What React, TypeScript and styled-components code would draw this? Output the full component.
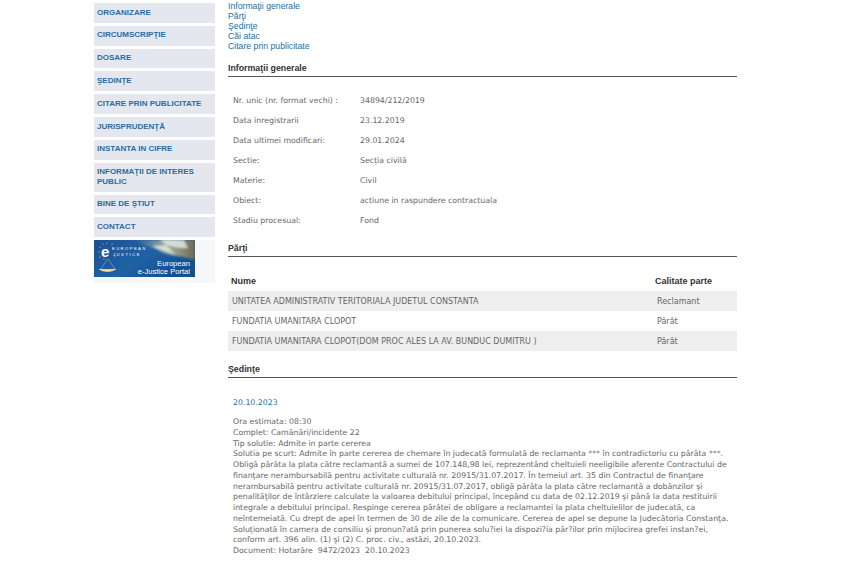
import React from 'react';
import styled, { createGlobalStyle } from 'styled-components';

const Global = createGlobalStyle`
  html, body { margin: 0; padding: 0; background: #fff; }
  body { font-family: "Liberation Sans", Arial, sans-serif; }
`;
const Page = styled.div`
  display: flex; align-items: flex-start; gap: 13px;
  width: 855px; height: 574px; overflow: hidden; padding: 3px 0 0 94px; box-sizing: border-box;
`;
const Sidebar = styled.nav`
  width: 121px; flex: none; display: flex; flex-direction: column; gap: 3px;
`;
const NavItem = styled.a`
  display: flex; align-items: center; box-sizing: border-box; min-height: 19.8px;
  padding: 4px 3px; background: #e4e8ee; color: #2a6ca6;
  font: bold 8px/10.5px "Liberation Sans", Arial, sans-serif;
`;
const BannerBox = styled.div`
  height: 43px; background: #f5f7fa;
  svg { display: block; }
`;
const BannerText = styled.text`
  font-family: "Liberation Sans", Arial, sans-serif; fill: #fff;
`;
const Main = styled.main`
  width: 509px; flex: none; margin-top: -3px;
`;
const Toc = styled.div`
  display: flex; flex-direction: column; padding-top: 1px;
`;
const TocLink = styled.a`
  font: 8.7px/10px "Liberation Sans", Arial, sans-serif; color: #1f6f9f;
`;
const Heading = styled.h2<{ $top: number }>`
  margin: ${p => p.$top}px 0 0; padding: 0 0 1px; height: 13px; border-bottom: 1px solid #555;
  font: bold 8.8px/13px "Liberation Sans", Arial, sans-serif; color: #333;
`;
const InfoList = styled.div`
  display: flex; flex-direction: column; padding: 14px 0 0 5px;
`;
const InfoRow = styled.div`
  display: grid; grid-template-columns: 127px 1fr; height: 20px; align-items: center;
  font: 7.8px/20px "DejaVu Sans", Verdana, sans-serif; color: #666;
`;
const PartyTable = styled.div`
  display: flex; flex-direction: column; padding-top: 14px;
`;
const PartyHead = styled.div`
  display: grid; grid-template-columns: 424px 1fr; height: 20px; padding-left: 3px;
  font: bold 9px/20px "Liberation Sans", Arial, sans-serif; color: #333;
`;
const PartyRow = styled.div<{ $shade?: boolean }>`
  display: grid; grid-template-columns: 425px 1fr; height: 20px; padding-left: 4px;
  background: ${p => (p.$shade ? '#eeeeee' : 'transparent')};
  font: 8px/21.5px "DejaVu Sans", Verdana, sans-serif; color: #666;
`;
const DateLink = styled.div`
  margin: 19px 0 0 5px;
  font: 7.8px/11px "DejaVu Sans", Verdana, sans-serif; color: #1f6f9f;
`;
const Details = styled.div`
  margin: 9px 0 0 5px; white-space: pre;
  font: 7.8px/10.75px "DejaVu Sans", Verdana, sans-serif; color: #666;
`;

const nav = ['ORGANIZARE', 'CIRCUMSCRIPŢIE', 'DOSARE', 'ŞEDINŢE', 'CITARE PRIN PUBLICITATE', 'JURISPRUDENŢĂ', 'INSTANTA IN CIFRE', 'INFORMAŢII DE INTERES PUBLIC', 'BINE DE ŞTIUT', 'CONTACT'];
const toc = ['Informaţii generale', 'Părţi', 'Şedinţe', 'Căi atac', 'Citare prin publicitate'];
const info = [
  ['Nr. unic (nr. format vechi) :', '34894/212/2019'],
  ['Data inregistrarii', '23.12.2019'],
  ['Data ultimei modificari:', '29.01.2024'],
  ['Sectie:', 'Secția civilă'],
  ['Materie:', 'Civil'],
  ['Obiect:', 'actiune in raspundere contractuala'],
  ['Stadiu procesual:', 'Fond'],
];
const parties = [
  ['UNITATEA ADMINISTRATIV TERITORIALA JUDETUL CONSTANTA', 'Reclamant'],
  ['FUNDATIA UMANITARA CLOPOT', 'Pârât'],
  ['FUNDATIA UMANITARA CLOPOT(DOM PROC ALES LA AV. BUNDUC DUMITRU )', 'Pârât'],
];
const details = `Ora estimata: 08:30
Complet: Camănări/incidente 22
Tip solutie: Admite in parte cererea
Solutia pe scurt: Admite în parte cererea de chemare în judecată formulată de reclamanta *** în contradictoriu cu pârâta ***.
Obligă pârâta la plata către reclamantă a sumei de 107.148,98 lei, reprezentând cheltuieli neeligibile aferente Contractului de
finanţare nerambursabilă pentru activitate culturală nr. 20915/31.07.2017. În temeiul art. 35 din Contractul de finanţare
nerambursabilă pentru activitate culturală nr. 20915/31.07.2017, obligă pârâta la plata către reclamantă a dobânzilor şi
penalităţilor de întârziere calculate la valoarea debitului principal, începând cu data de 02.12.2019 şi până la data restituirii
integrale a debitului principal. Respinge cererea pârâtei de obligare a reclamantei la plata cheltuielilor de judecată, ca
neîntemeiată. Cu drept de apel în termen de 30 de zile de la comunicare. Cererea de apel se depune la Judecătoria Constanţa.
Soluționată în camera de consiliu și pronun?ată prin punerea solu?iei la dispozi?ia păr?ilor prin mijlocirea grefei instan?ei,
conform art. 396 alin. (1) şi (2) C. proc. civ., astăzi, 20.10.2023.
Document: Hotarâre  9472/2023  20.10.2023`;

const Banner = () => (
  <svg width="101" height="37" viewBox="0 0 101 37">
    <defs>
      <linearGradient id="bg" x1="0" y1="0" x2="1" y2="0.5">
        <stop offset="0" stopColor="#1d4f96" />
        <stop offset="0.55" stopColor="#1f62a6" />
        <stop offset="1" stopColor="#13508f" />
      </linearGradient>
      <linearGradient id="sky" x1="0" y1="0" x2="1" y2="0">
        <stop offset="0" stopColor="#8f9a8c" stopOpacity="0" />
        <stop offset="0.55" stopColor="#a4b0a4" />
        <stop offset="1" stopColor="#6d6a50" />
      </linearGradient>
      <filter id="soft"><feGaussianBlur stdDeviation="0.8" /></filter>
    </defs>
    <rect width="101" height="37" fill="url(#bg)" />
    <path d="M40 0H101V20C88 15 74 17 64 10C57 6 48 6 40 0Z" fill="url(#sky)" filter="url(#soft)" />
    <path d="M66 0C72 6 84 9 94 8L90 0ZM58 6C66 11 74 11 82 15L72 5Z" fill="#e6ebe6" opacity="0.8" filter="url(#soft)" />
    <g fill="#f2d43c">
      {[[5, 12], [6, 7], [9, 4], [13, 3], [18, 4], [21, 16], [6, 17], [10, 19]].map(([x, y]) => (
        <circle key={`${x}-${y}`} cx={x} cy={y} r="0.6" />
      ))}
    </g>
    <BannerText x="7" y="16.5" fontSize="15" fontWeight="bold">e</BannerText>
    <path d="M13.5 19L7 29M14 19L21 29" stroke="#a9c3df" strokeWidth="0.5" />
    <path d="M5 29C9 33 18 33 22 29Z" fill="#f0cf3a" />
    <path d="M5 29C9 31 18 31 22 29" fill="none" stroke="#fff" strokeWidth="0.5" />
    <BannerText x="18" y="10" fontSize="4.2" letterSpacing="1.4">EUROPEAN</BannerText>
    <BannerText x="19" y="16" fontSize="4.2" letterSpacing="1.5">JUSTICE</BannerText>
    <BannerText x="96" y="26" fontSize="7.6" textAnchor="end">European</BannerText>
    <BannerText x="96" y="33.5" fontSize="7.6" textAnchor="end">e-Justice Portal</BannerText>
  </svg>
);

export default function App() {
  return (
    <Page>
      <Global />
      <Sidebar>
        {nav.map(n => <NavItem key={n}>{n}</NavItem>)}
        <BannerBox><Banner /></BannerBox>
      </Sidebar>
      <Main>
        <Toc>{toc.map(t => <TocLink key={t}>{t}</TocLink>)}</Toc>
        <Heading $top={11}>Informaţii generale</Heading>
        <InfoList>
          {info.map(([k, v]) => <InfoRow key={k}><span>{k}</span><span>{v}</span></InfoRow>)}
        </InfoList>
        <Heading $top={11}>Părţi</Heading>
        <PartyTable>
          <PartyHead><span>Nume</span><span>Calitate parte</span></PartyHead>
          {parties.map(([n, q], i) => (
            <PartyRow key={n} $shade={i % 2 === 0}><span>{n}</span><span>{q}</span></PartyRow>
          ))}
        </PartyTable>
        <Heading $top={12}>Şedinţe</Heading>
        <DateLink>20.10.2023</DateLink>
        <Details>{details}</Details>
      </Main>
    </Page>
  );
}
